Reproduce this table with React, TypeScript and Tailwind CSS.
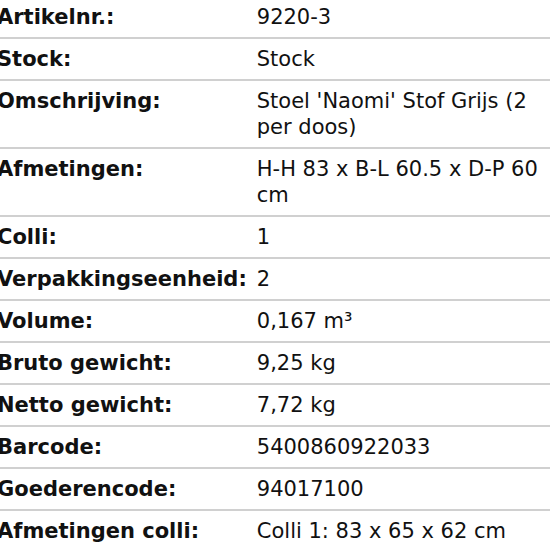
const specs = [
  { label: "Artikelnr.:", value: "9220-3" },
  { label: "Stock:", value: "Stock" },
  { label: "Omschrijving:", value: "Stoel 'Naomi' Stof Grijs (2 per doos)" },
  { label: "Afmetingen:", value: "H-H 83 x B-L 60.5 x D-P 60 cm" },
  { label: "Colli:", value: "1" },
  { label: "Verpakkingseenheid:", value: "2" },
  { label: "Volume:", value: "0,167 m³" },
  { label: "Bruto gewicht:", value: "9,25 kg" },
  { label: "Netto gewicht:", value: "7,72 kg" },
  { label: "Barcode:", value: "5400860922033" },
  { label: "Goederencode:", value: "94017100" },
  { label: "Afmetingen colli:", value: "Colli 1: 83 x 65 x 62 cm" },
];

export default function App() {
  return (
    <div className="w-[550px] h-[550px] overflow-hidden bg-white">
      <table
        className="-ml-[3px] -mt-[3px] border-collapse text-[21px] text-[#111] leading-[26px]"
        style={{ fontFamily: '"DejaVu Sans", sans-serif' }}
      >
        <tbody>
          {specs.map((row) => (
            <tr key={row.label} className="border-b-2 border-[#d0d0d0]">
              <th className="py-[7px] pr-[10px] text-left align-top font-bold whitespace-nowrap">
                {row.label}
              </th>
              <td className="py-[7px] pr-2 align-top w-[300px]">{row.value}</td>
            </tr>
          ))}
        </tbody>
      </table>
    </div>
  );
}
